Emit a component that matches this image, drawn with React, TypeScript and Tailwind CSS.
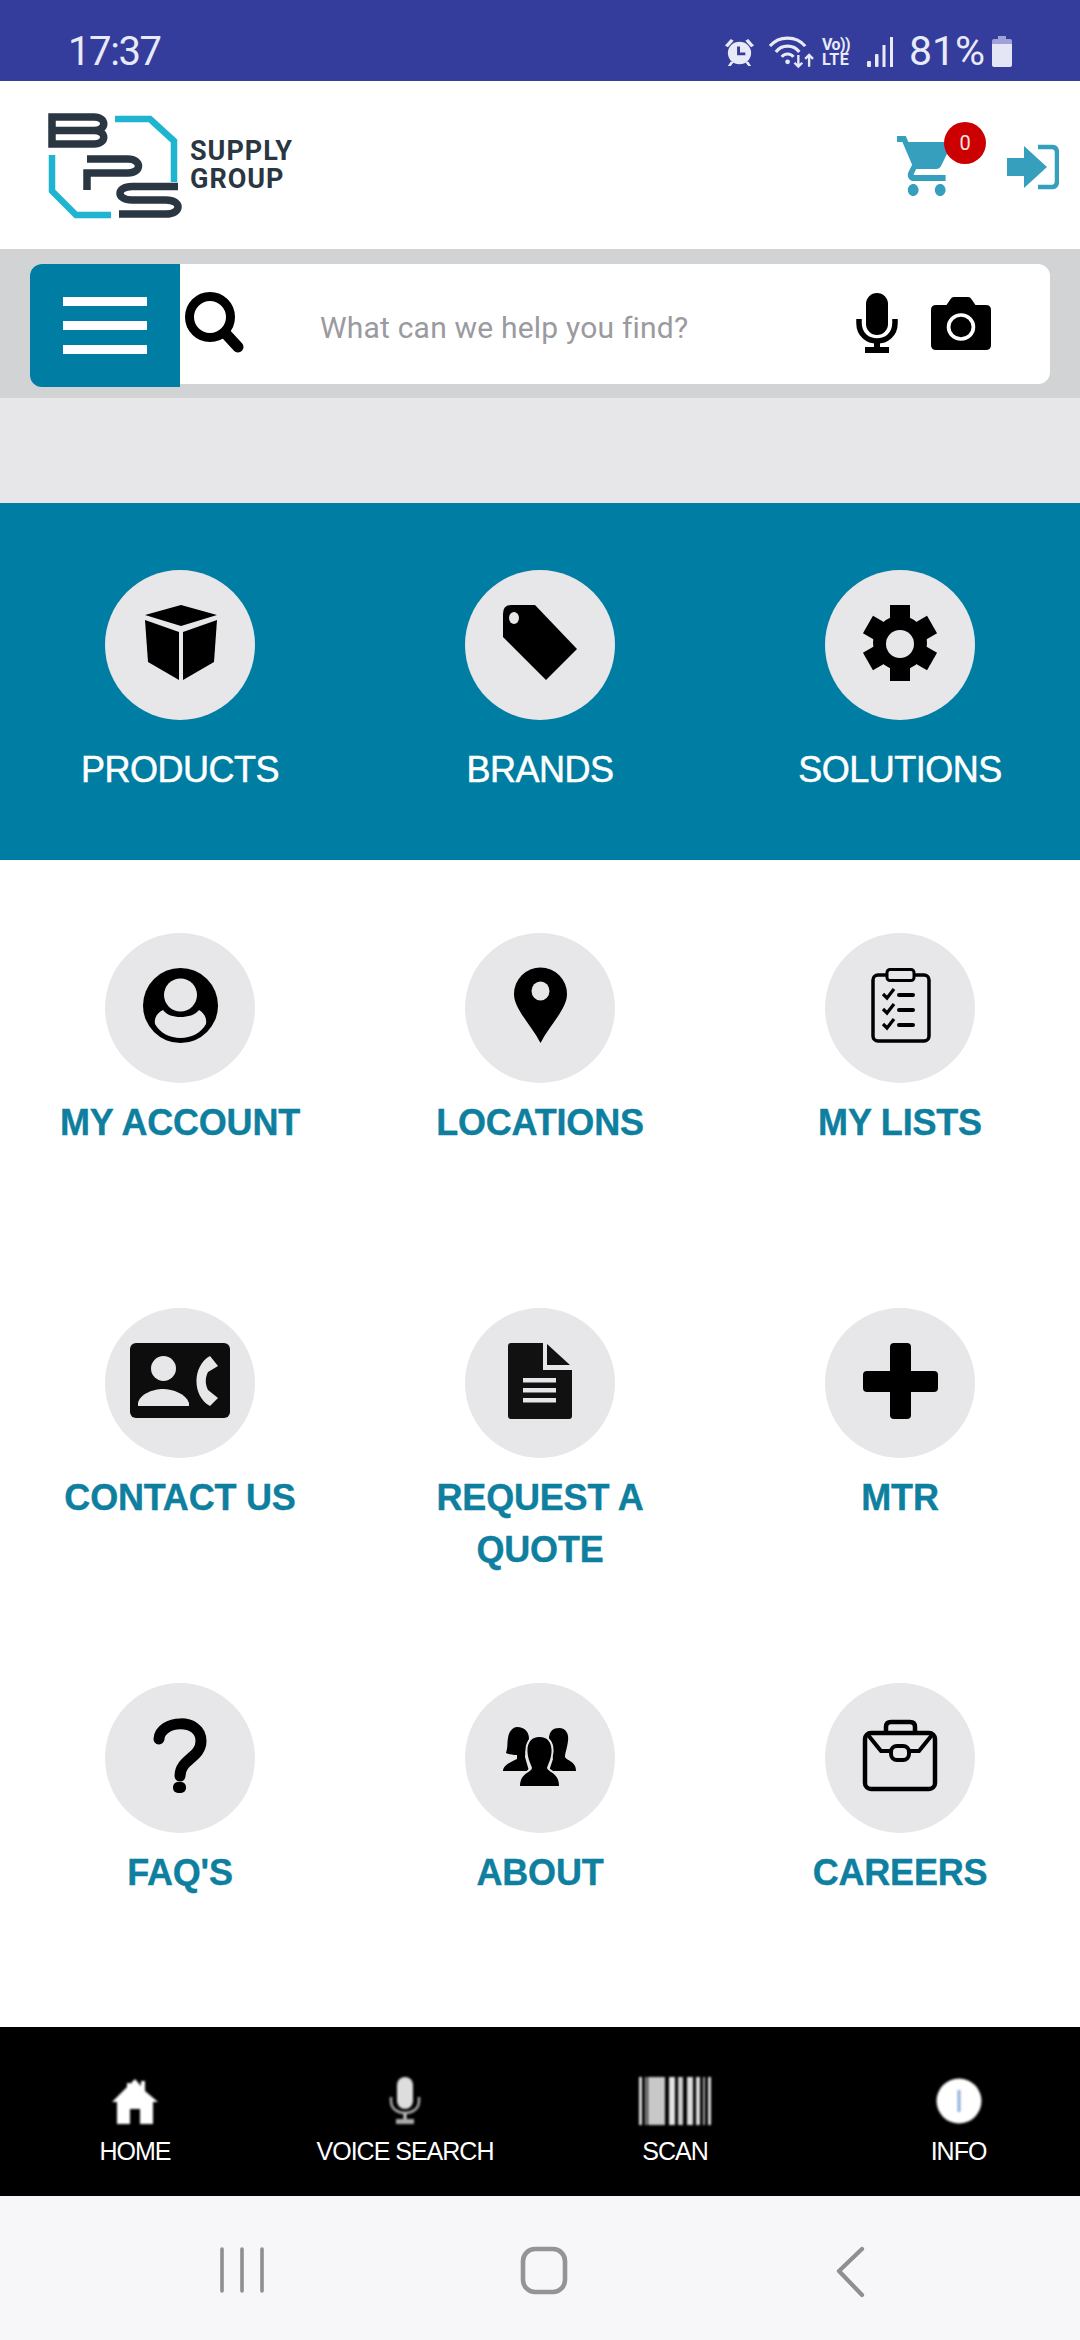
import React from "react";

const bg = "#e7e7e9";

function Glyph({ children }: { children: React.ReactNode }) {
  return (
    <svg width="150" height="150" viewBox="0 0 150 150" className="block">
      {children}
    </svg>
  );
}

const BoxIcon = () => (
  <Glyph>
    <path d="M40 45 76 35 112 45 76 56Z" />
    <path d="M40 50 74 62V110L43 92Z" />
    <path d="M78 62 112 50 109 92 78 110Z" />
  </Glyph>
);
const TagIcon = () => (
  <Glyph>
    <path d="M46 35H70L112 79 81 110 38 67V44Q38 35 46 35Z" />
    <ellipse cx="49" cy="48" rx="5" ry="6" fill={bg} />
  </Glyph>
);
const GearIcon = () => (
  <Glyph>
    <circle cx="75" cy="73" r="27" />
    <rect x="65" y="35" width="20" height="76" />
    <rect x="65" y="36" width="20" height="74" transform="rotate(60 75 73)" />
    <rect x="65" y="36" width="20" height="74" transform="rotate(120 75 73)" />
    <circle cx="75" cy="74" r="14" fill={bg} />
  </Glyph>
);
const PersonIcon = () => (
  <Glyph>
    <circle cx="75.5" cy="72.5" r="37.5" />
    <circle cx="75.5" cy="62" r="16.5" fill={bg} />
    <path d="M58 77C62 82 68 84 75.5 84S90 82 94 77C99 80 102 85 101 91C96 100 86 105 75.5 105S55 100 50 91C49 85 52 80 58 77Z" fill={bg} />
  </Glyph>
);
const PinIcon = () => (
  <Glyph>
    <path d="M75.5 110C65 90 49 76 49 61a26.5 26.5 0 0 1 53 0C102 76 86 90 75.5 110Z" />
    <ellipse cx="75.5" cy="58" rx="9" ry="9.5" fill={bg} />
  </Glyph>
);
const ClipboardIcon = () => (
  <Glyph>
    <rect x="48" y="42" width="56" height="66" rx="5" fill="none" stroke="#000" strokeWidth="3.5" />
    <rect x="62" y="36.5" width="27" height="11" rx="3" fill={bg} stroke="#000" strokeWidth="3" />
    {[61, 76, 91].map((y) => (
      <g key={y}>
        <path d={`M58 ${y}l4 4 7-9`} fill="none" stroke="#000" strokeWidth="3.2" />
        <rect x="72" y={y - 1} width="18" height="4" rx="2" />
      </g>
    ))}
  </Glyph>
);
const CardIcon = () => (
  <Glyph>
    <rect x="25" y="35" width="100" height="75" rx="6" fill="#0d0d0d" />
    <circle cx="58.5" cy="60.5" r="12.5" fill={bg} />
    <path d="M33 98V95C35 86 48 81 58 81S81 86 84 95V98Z" fill={bg} />
    <path d="M105 48 113 58 103 64C100 70 100 76 103 82L113 90 105 98C87 88 87 58 105 48Z" fill={bg} />
  </Glyph>
);
const DocIcon = () => (
  <Glyph>
    <path d="M46 35H78V62H107V108Q107 111 104 111H46Q43 111 43 108V38Q43 35 46 35Z" fill="#111" />
    <path d="M82 36 105 57H82Z" fill="#111" />
    <rect x="58" y="70" width="33" height="4.5" fill={bg} />
    <rect x="58" y="80" width="33" height="4.5" fill={bg} />
    <rect x="58" y="90" width="33" height="4.5" fill={bg} />
  </Glyph>
);
const PlusIcon = () => (
  <Glyph>
    <rect x="65" y="35" width="21" height="76" rx="4" />
    <rect x="38" y="63" width="75" height="21" rx="4" />
  </Glyph>
);
const QuestionIcon = () => (
  <Glyph>
    <path d="M54 56C55 37 96 34 96 58C96 75 75 76 75 93" fill="none" stroke="#000" strokeWidth="11" strokeLinecap="round" />
    <rect x="68" y="99" width="13" height="11" rx="5" />
  </Glyph>
);
const PeopleIcon = () => (
  <Glyph>
    <path d="M52 44C60 44 64 49 64 56C62 62 60 68 60 74L64 88H38C38 82 46 79 52 76V72C47 72 43 71 41 70C43 64 42 60 43 55C44 48 48 44 52 44Z" />
    <path d="M94 45C101 45 104 51 103 58C102 66 100 70 100 74C102 78 111 78 111 88H84L88 76C86 70 84 60 84 54C85 48 88 45 94 45Z" />
    <path
      d="M74.5 54C83 54 87 60 86.5 69C86 77 83 81 82 85C84 90 94 90 94 103H55C55 90 66 90 67 85C66 81 63 77 62.5 69C62 60 66 54 74.5 54Z"
      stroke={bg}
      strokeWidth="4"
      paintOrder="stroke"
    />
  </Glyph>
);
const BagIcon = () => (
  <Glyph>
    <rect x="40" y="50" width="70" height="56" rx="6" fill="none" stroke="#000" strokeWidth="4.5" />
    <path d="M61 49V44Q61 39 66 39H85Q90 39 90 44V49" fill="none" stroke="#000" strokeWidth="4.5" />
    <path d="M43 52 56 68H66M107 52 94 68H84" fill="none" stroke="#000" strokeWidth="4" />
    <rect x="66" y="63" width="18" height="14" rx="6" fill={bg} stroke="#000" strokeWidth="4" />
  </Glyph>
);

function Tile({
  icon,
  label,
  inverse,
}: {
  icon: React.ReactNode;
  label: React.ReactNode;
  inverse?: boolean;
}) {
  return (
    <div className="flex flex-col items-center">
      <div className="h-[150px] w-[150px] rounded-full bg-[#e7e7e9]">{icon}</div>
      <div
        className={
          inverse
            ? "mt-[24px] text-center text-[36px] leading-[52px] tracking-[-0.5px] text-white [-webkit-text-stroke:0.5px_white]"
            : "mt-[14px] text-center text-[36px] font-bold leading-[52px] tracking-[-0.2px] text-[#0e7f9f] [-webkit-text-stroke:0.4px_#0e7f9f]"
        }
      >
        {label}
      </div>
    </div>
  );
}

function StatusBar() {
  return (
    <div className="flex h-[81px] shrink-0 items-center bg-[#343c9c] pl-[68px] pt-[22px] font-['Roboto',sans-serif] text-[#e8eaf8]">
      <span className="text-[40px] leading-none tracking-[-1.4px]">17:37</span>
      <div className="ml-auto flex items-center pr-[67px]">
        <svg width="31" height="30" viewBox="0 0 32 32" fill="#e8eaf8" preserveAspectRatio="none">
          <circle cx="16" cy="17" r="12" />
          <path d="M1 9 7 2l3 2-6 7ZM31 9l-6-7-3 2 6 7ZM7 26l-3 5h3l3-4ZM25 26l3 5h-3l-3-4Z" />
          <path d="M15 10v8h7" fill="none" stroke="#343c9c" strokeWidth="3" />
        </svg>
        <svg width="45" height="34" viewBox="0 0 46 34" fill="none" stroke="#e8eaf8" strokeWidth="3.2" className="ml-[14px]">
          <path d="M1 11C10 0 28 0 37 11" />
          <path d="M7 17C13 9 25 9 31 17" />
          <path d="M13 22C16 18 22 18 25 22" />
          <circle cx="19" cy="27" r="2.4" fill="#e8eaf8" stroke="none" />
          <path d="M30 20v12M26 28l4 4 4-4M41 32V20M37 24l4-4 4 4" strokeWidth="2.4" />
        </svg>
        <div className="ml-[8px] flex w-[32px] flex-col items-start text-[16px] font-bold leading-[15px]">
          <span className="tracking-[-0.5px]">Vo))</span>
          <span className="tracking-[0.5px]">LTE</span>
        </div>
        <svg width="28" height="32" viewBox="0 0 28 32" fill="#e8eaf8" className="ml-[12px]">
          <rect x="1" y="25" width="4" height="6" rx="1" />
          <rect x="9" y="18" width="3.5" height="13" rx="1" />
          <rect x="16.5" y="9" width="3" height="22" />
          <rect x="24" y="1" width="3" height="30" />
        </svg>
        <span className="ml-[15px] text-[41px] leading-none">81%</span>
        <svg width="22" height="33" viewBox="0 0 22 33" className="ml-[6px]">
          <path d="M7 1H15V4H19Q21 4 21 6V9H1V6Q1 4 3 4H7Z" fill="#9ea3d6" />
          <path d="M1 9H21V30Q21 32 19 32H3Q1 32 1 30Z" fill="#e4e6f6" />
        </svg>
      </div>
    </div>
  );
}

function Logo() {
  return (
    <svg width="140" height="112" viewBox="44 108 140 112" fill="none" className="shrink-0">
      <path d="M115 118H150L174 140V181" stroke="#1fb5d0" strokeWidth="6.5" />
      <path d="M52 154V190L76 214H111" stroke="#1fb5d0" strokeWidth="6.5" />
      <g stroke="#2a3642" strokeWidth="7.5">
        <path d="M52 116H94C107 116 107 129.5 94 129.5C107 129.5 107 143 94 143H52ZM52 129.5H94" />
        <path d="M87 189V172H128C142 172 142 158 128 158H87" />
        <path d="M178 185.5H132C116 185.5 116 199 132 199H166C182 199 182 213 166 213H119" />
      </g>
    </svg>
  );
}

function Header() {
  return (
    <div className="relative flex h-[168px] shrink-0 items-center bg-white pl-[44px]">
      <div className="flex items-center">
        <Logo />
        <div className="ml-[6px] font-['Roboto',sans-serif] text-[27px] font-bold leading-[28px] tracking-[1px] text-[#2a3642]">
          <div>SUPPLY</div>
          <div>GROUP</div>
        </div>
      </div>
      <div className="ml-auto mr-[21px] flex items-start">
        <div className="relative mt-[2px] h-[60px] w-[54px]">
          <svg width="54" height="60" viewBox="1 2 20 20" preserveAspectRatio="none" fill="#369fbd" className="block">
            <path d="M7 18c-1.1 0-1.99.9-1.99 2S5.9 22 7 22s2-.9 2-2-.9-2-2-2zM1 2v2h2l3.6 7.59-1.35 2.45c-.16.28-.25.61-.25.96 0 1.1.9 2 2 2h12v-2H7.42c-.14 0-.25-.11-.25-.25l.03-.12.9-1.63h7.45c.75 0 1.41-.41 1.75-1.03l3.58-6.49c.08-.14.12-.31.12-.48 0-.55-.45-1-1-1H5.21l-.94-2H1zm16 16c-1.1 0-1.99.9-1.99 2s.89 2 1.99 2 2-.9 2-2-.9-2-2-2z" />
          </svg>
          <div className="absolute left-[47px] top-[-14px] flex h-[42px] w-[42px] items-center justify-center rounded-full bg-[#cc0000] font-['Roboto',sans-serif] text-[20px] text-[#f7e6e6]">
            0
          </div>
        </div>
        <svg width="52" height="46" viewBox="0 0 52 46" className="ml-[56px] mt-[10px]">
          <path d="M0 14H17V2L40 23 17 44V32H0Z" fill="#369fbd" />
          <path d="M31 3H45Q50 3 50 9V37Q50 43 45 43H31" fill="none" stroke="#369fbd" strokeWidth="4.5" />
        </svg>
      </div>
    </div>
  );
}

function SearchBand() {
  return (
    <div className="h-[149px] shrink-0 bg-[#d1d3d4] pl-[30px] pr-[30px] pt-[15px]">
      <div className="flex h-[120px] items-start rounded-[12px] bg-white">
        <div className="flex h-[123px] w-[150px] shrink-0 flex-col items-center justify-center gap-[15px] rounded-l-[12px] bg-[#007da3]">
          <div className="h-[9px] w-[84px] bg-white" />
          <div className="h-[9px] w-[84px] bg-white" />
          <div className="h-[9px] w-[84px] bg-white" />
        </div>
        <svg width="60" height="62" viewBox="0 0 60 62" className="ml-[5px] mt-[28px] shrink-0">
          <circle cx="25" cy="25" r="20.5" fill="none" stroke="#000" strokeWidth="9" />
          <path d="M41 42 53 55" stroke="#000" strokeWidth="11" strokeLinecap="round" />
        </svg>
        <span className="ml-[75px] mt-[44px] font-['Roboto',sans-serif] text-[30px] leading-[40px] tracking-[0.2px] text-[#9a9aa0]">
          What can we help you find?
        </span>
        <svg width="42" height="62" viewBox="0 0 42 62" className="ml-auto mt-[29px] shrink-0">
          <rect x="10" y="0" width="22" height="42" rx="11" />
          <path d="M3 26V30C3 54 39 54 39 30V26" fill="none" stroke="#000" strokeWidth="5.5" />
          <path d="M21 46V56" stroke="#000" strokeWidth="6" />
          <rect x="9" y="54" width="24" height="6" />
        </svg>
        <svg width="60" height="53" viewBox="0 0 58 53" preserveAspectRatio="none" className="ml-[33px] mr-[59px] mt-[33px] shrink-0">
          <path d="M5 8H15L19 2Q20 0 22 0H36Q38 0 39 2L43 8H53Q58 8 58 13V48Q58 53 53 53H5Q0 53 0 48V13Q0 8 5 8Z" />
          <circle cx="29" cy="30" r="12" fill="none" stroke="#fff" strokeWidth="3.6" />
        </svg>
      </div>
    </div>
  );
}

function BottomItem({ label, icon, shift }: { label: string; icon: React.ReactNode; shift?: boolean }) {
  return (
    <div className={shift ? "flex flex-col items-center pl-[27px]" : "flex flex-col items-center"}>
      <div className="flex h-[49px] items-center justify-center blur-[0.8px]">{icon}</div>
      <span className="mt-[12px] text-[25px] leading-[28px] tracking-[-1px] text-white">{label}</span>
    </div>
  );
}

function BottomBar() {
  return (
    <div className="grid h-[169px] shrink-0 grid-cols-4 bg-black pt-[49px]">
      <BottomItem
        label="HOME"
        icon={
          <svg width="46" height="46" viewBox="0 0 46 46" fill="#fff">
            <path d="M23 1 29 8V3H33V13L46 24H41V46H28V31H18V46H5V24H0L15 9V5H18V6Z" />
          </svg>
        }
      />
      <BottomItem
        label="VOICE SEARCH"
        icon={
          <svg width="32" height="48" viewBox="0 0 32 48">
            <rect x="8" y="0" width="16" height="32" rx="8" fill="#ddd" />
            <path d="M2 20V24C2 40 30 40 30 24V20" fill="none" stroke="#aaa" strokeWidth="2.5" />
            <path d="M16 36V43" stroke="#ccc" strokeWidth="3" />
            <rect x="7" y="42" width="18" height="5" fill="#aaa" />
          </svg>
        }
      />
      <BottomItem
        label="SCAN"
        icon={
          <svg width="72" height="48" viewBox="0 0 72 48">
            <rect x="0" y="0" width="3" height="48" fill="#ddd" />
            <rect x="6" y="0" width="2" height="48" fill="#999" />
            <rect x="9" y="0" width="17" height="48" fill="#c8c8c8" />
            <rect x="30" y="0" width="6" height="48" fill="#e4e4e4" />
            <rect x="39" y="0" width="5" height="48" fill="#ccc" />
            <rect x="48" y="0" width="6" height="48" fill="#ddd" />
            <rect x="57" y="0" width="4" height="48" fill="#ddd" />
            <rect x="64" y="0" width="2" height="48" fill="#aaa" />
            <rect x="69" y="0" width="3" height="48" fill="#ddd" />
          </svg>
        }
      />
      <BottomItem
        shift
        label="INFO"
        icon={
          <svg width="46" height="46" viewBox="0 0 46 46">
            <circle cx="23" cy="23" r="22.5" fill="#fff" />
            <rect x="21.5" y="12" width="3" height="22" fill="#8fb0d8" />
          </svg>
        }
      />
    </div>
  );
}

function NavBar() {
  return (
    <div className="flex h-[144px] shrink-0 items-start bg-[#f7f7f9] pt-[50px]">
      <svg width="48" height="48" viewBox="0 0 48 48" stroke="#8e8e93" strokeWidth="3.6" strokeLinecap="round" className="ml-[218px]">
        <path d="M4 3V45M24 3V45M44 3V45" />
      </svg>
      <svg width="50" height="50" viewBox="0 0 50 50" fill="none" stroke="#949498" strokeWidth="4.6" className="ml-[253px]">
        <rect x="4" y="3" width="42" height="43" rx="12" />
      </svg>
      <svg width="32" height="52" viewBox="0 0 32 52" fill="none" stroke="#8e8e93" strokeWidth="4.2" strokeLinecap="round" strokeLinejoin="round" className="ml-[265px]">
        <path d="M28 3 5 25 28 49" />
      </svg>
    </div>
  );
}

export default function App() {
  return (
    <div className="flex h-[2340px] w-[1080px] flex-col overflow-hidden bg-white font-['Liberation_Sans',Arial,sans-serif]">
      <StatusBar />
      <Header />
      <SearchBand />
      <div className="h-[105px] shrink-0 bg-[#e7e7e9]" />
      <div className="grid h-[357px] shrink-0 grid-cols-3 bg-[#007da3] pt-[67px]">
        <Tile inverse icon={<BoxIcon />} label="PRODUCTS" />
        <Tile inverse icon={<TagIcon />} label="BRANDS" />
        <Tile inverse icon={<GearIcon />} label="SOLUTIONS" />
      </div>
      <div className="grid min-h-0 flex-1 grid-cols-3 grid-rows-[375px_375px_1fr] bg-white pt-[73px]">
        <Tile icon={<PersonIcon />} label="MY ACCOUNT" />
        <Tile icon={<PinIcon />} label="LOCATIONS" />
        <Tile icon={<ClipboardIcon />} label="MY LISTS" />
        <Tile icon={<CardIcon />} label="CONTACT US" />
        <Tile icon={<DocIcon />} label={<>REQUEST A<br />QUOTE</>} />
        <Tile icon={<PlusIcon />} label="MTR" />
        <Tile icon={<QuestionIcon />} label="FAQ'S" />
        <Tile icon={<PeopleIcon />} label="ABOUT" />
        <Tile icon={<BagIcon />} label="CAREERS" />
      </div>
      <BottomBar />
      <NavBar />
    </div>
  );
}
